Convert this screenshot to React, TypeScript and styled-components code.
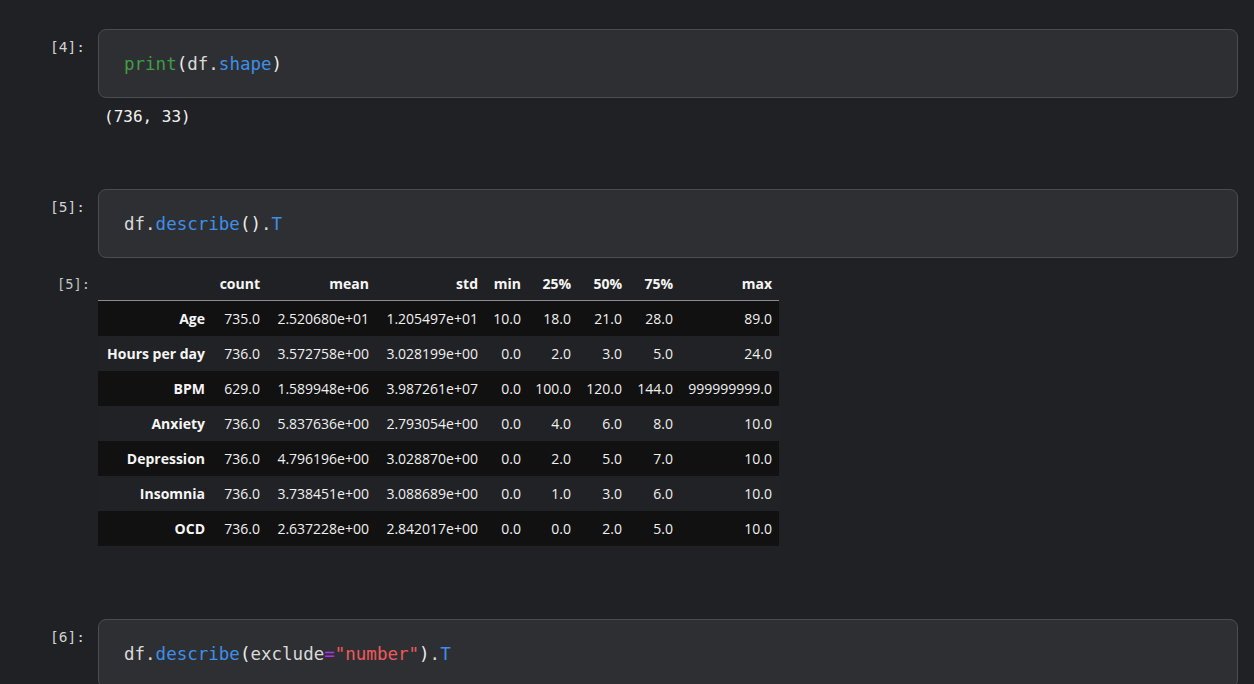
import React from "react";
import styled, { createGlobalStyle } from "styled-components";

const GlobalStyle = createGlobalStyle`
  html, body { margin: 0; padding: 0; background: #202124; }
  body { font-family: "Open Sans", "Noto Sans", sans-serif; }
`;

const Notebook = styled.div`
  display: flex;
  flex-direction: column;
  gap: 62px;
  padding: 29px 16px 0 0;
  min-height: 684px;
  box-sizing: border-box;
  background: #202124;
`;

const Cell = styled.section`
  display: flex;
  flex-direction: column;
  gap: 9px;
`;

const Row = styled.div`
  display: flex;
  align-items: flex-start;
`;

const Prompt = styled.div<{ $out?: boolean }>`
  flex: 0 0 98px;
  box-sizing: border-box;
  text-align: right;
  padding-right: ${(p) => (p.$out ? "8px" : "13px")};
  padding-top: ${(p) => (p.$out ? "9px" : "10px")};
  font-family: "DejaVu Sans Mono", "Liberation Mono", monospace;
  font-size: ${(p) => (p.$out ? "13.7px" : "14.5px")};
  line-height: 17px;
  color: ${(p) => (p.$out ? "#c4c4c4" : "#d2d2d2")};
  white-space: pre;
`;

const PromptSpacer = styled.div`
  flex: 0 0 98px;
`;

const InputBox = styled.div`
  flex: 1;
  background: #2e2f33;
  border: 1px solid #4b4c50;
  border-radius: 8px;
  padding: 22px 25px 20px;
`;

const Code = styled.pre`
  margin: 0;
  font-family: "DejaVu Sans Mono", "Liberation Mono", monospace;
  font-size: 17.5px;
  line-height: 25px;
  color: #dadada;
`;

const Tok = styled.span<{ $k: "fn" | "attr" | "op" | "str" | "punc" }>`
  color: ${(p) =>
    ({
      fn: "#3f9e45",
      attr: "#3d8fe8",
      op: "#b030e8",
      str: "#f05a5a",
      punc: "#ececec",
    })[p.$k]};
`;

const Stream = styled.pre`
  margin: 0;
  padding-left: 6px;
  font-family: "DejaVu Sans Mono", "Liberation Mono", monospace;
  font-size: 16px;
  line-height: 20px;
  color: #f2f2f2;
`;

const Table = styled.table`
  border-collapse: collapse;
  table-layout: fixed;
  width: 681px;
  margin-bottom: 11px;
  font-family: "Open Sans", "Noto Sans", sans-serif;
  font-size: 14px;
  color: #f0f0f0;
`;

const Col = styled.col<{ $w: number }>`
  width: ${(p) => p.$w}px;
`;

const Th = styled.th`
  text-align: right;
  font-weight: 700;
  color: #f6f6f6;
  padding: 0 7px;
  height: 33px;
  border-bottom: 1px solid #8c8c8c;
  white-space: nowrap;
`;

const BodyRow = styled.tr<{ $dark: boolean }>`
  background: ${(p) => (p.$dark ? "#111111" : "#212225")};
`;

const RowHead = styled.th`
  text-align: right;
  font-weight: 700;
  color: #f6f6f6;
  padding: 0 7px;
  height: 35px;
  white-space: nowrap;
`;

const Td = styled.td`
  text-align: right;
  padding: 0 7px;
  height: 35px;
  white-space: nowrap;
`;

const widths = [114, 55, 109, 109, 43, 50, 51, 51, 99];
const headers = ["", "count", "mean", "std", "min", "25%", "50%", "75%", "max"];
const rows: [string, ...string[]][] = [
  ["Age", "735.0", "2.520680e+01", "1.205497e+01", "10.0", "18.0", "21.0", "28.0", "89.0"],
  ["Hours per day", "736.0", "3.572758e+00", "3.028199e+00", "0.0", "2.0", "3.0", "5.0", "24.0"],
  ["BPM", "629.0", "1.589948e+06", "3.987261e+07", "0.0", "100.0", "120.0", "144.0", "999999999.0"],
  ["Anxiety", "736.0", "5.837636e+00", "2.793054e+00", "0.0", "4.0", "6.0", "8.0", "10.0"],
  ["Depression", "736.0", "4.796196e+00", "3.028870e+00", "0.0", "2.0", "5.0", "7.0", "10.0"],
  ["Insomnia", "736.0", "3.738451e+00", "3.088689e+00", "0.0", "1.0", "3.0", "6.0", "10.0"],
  ["OCD", "736.0", "2.637228e+00", "2.842017e+00", "0.0", "0.0", "2.0", "5.0", "10.0"],
];

export default function App() {
  return (
    <>
      <GlobalStyle />
      <Notebook>
        <Cell>
          <Row>
            <Prompt>[4]:</Prompt>
            <InputBox>
              <Code>
                <Tok $k="fn">print</Tok>
                <Tok $k="punc">(</Tok>df.<Tok $k="attr">shape</Tok>
                <Tok $k="punc">)</Tok>
              </Code>
            </InputBox>
          </Row>
          <Row>
            <PromptSpacer />
            <Stream>(736, 33)</Stream>
          </Row>
        </Cell>

        <Cell>
          <Row>
            <Prompt>[5]:</Prompt>
            <InputBox>
              <Code>
                df.<Tok $k="attr">describe</Tok>
                <Tok $k="punc">()</Tok>.<Tok $k="attr">T</Tok>
              </Code>
            </InputBox>
          </Row>
          <Row>
            <Prompt $out>[5]:</Prompt>
            <Table>
              <colgroup>
                {widths.map((w, i) => (
                  <Col key={i} $w={w} />
                ))}
              </colgroup>
              <thead>
                <tr>
                  {headers.map((h, i) => (
                    <Th key={i}>{h}</Th>
                  ))}
                </tr>
              </thead>
              <tbody>
                {rows.map(([name, ...vals], i) => (
                  <BodyRow key={name} $dark={i % 2 === 0}>
                    <RowHead>{name}</RowHead>
                    {vals.map((v, j) => (
                      <Td key={j}>{v}</Td>
                    ))}
                  </BodyRow>
                ))}
              </tbody>
            </Table>
          </Row>
        </Cell>

        <Cell>
          <Row>
            <Prompt>[6]:</Prompt>
            <InputBox>
              <Code>
                df.<Tok $k="attr">describe</Tok>
                <Tok $k="punc">(</Tok>exclude<Tok $k="op">=</Tok>
                <Tok $k="str">"number"</Tok>
                <Tok $k="punc">)</Tok>.<Tok $k="attr">T</Tok>
              </Code>
            </InputBox>
          </Row>
        </Cell>
      </Notebook>
    </>
  );
}
